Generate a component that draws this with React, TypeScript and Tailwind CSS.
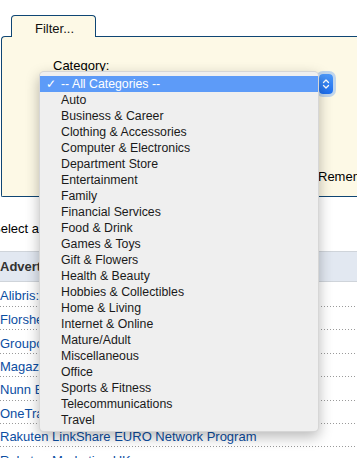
const CATEGORIES = [
  "Auto",
  "Business & Career",
  "Clothing & Accessories",
  "Computer & Electronics",
  "Department Store",
  "Entertainment",
  "Family",
  "Financial Services",
  "Food & Drink",
  "Games & Toys",
  "Gift & Flowers",
  "Health & Beauty",
  "Hobbies & Collectibles",
  "Home & Living",
  "Internet & Online",
  "Mature/Adult",
  "Miscellaneous",
  "Office",
  "Sports & Fitness",
  "Telecommunications",
  "Travel",
];

const ADVERTISERS = [
  "Alibris: Books, Music & Movies",
  "Florsheim Shoes",
  "Groupon UK",
  "Magazines.com",
  "Nunn Bush Shoes",
  "OneTravel.com",
  "Rakuten LinkShare EURO Network Program",
  "Rakuten Marketing UK",
];

const dotted =
  "bg-[linear-gradient(to_right,#9a9a9a_1px,transparent_1px)] bg-[length:3px_1px] bg-repeat-x bg-bottom";

function SelectKnob() {
  return (
    <div className="flex h-[20px] w-[14px] items-center justify-center rounded-[4px] bg-gradient-to-b from-[#4c98f8] to-[#1d6ff0] shadow-[0_0_0_3px_rgba(120,170,245,0.45)]">
      <svg width="8" height="12" viewBox="0 0 8 12" fill="none">
        <path d="M1.5 4.5 L4 2 L6.5 4.5" stroke="white" strokeWidth="1.3" strokeLinecap="round" strokeLinejoin="round" />
        <path d="M1.5 7.5 L4 10 L6.5 7.5" stroke="white" strokeWidth="1.3" strokeLinecap="round" strokeLinejoin="round" />
      </svg>
    </div>
  );
}

function CategoryMenu() {
  return (
    <div className="absolute left-[39px] top-[71px] z-20 w-[280px] rounded-[5px] border border-black/10 bg-[#efefef] pb-[3px] pt-[4px] font-['Liberation_Sans',Arial,sans-serif] text-[12.3px] text-[#1a1a1a] shadow-[0_5px_14px_rgba(0,0,0,0.28)]">
      <div className="flex h-[16px] items-center bg-[#5d9bf8] text-white">
        <span className="w-[21px] pl-[6px] text-[12px] leading-none">✓</span>
        <span className="leading-none">-- All Categories --</span>
      </div>
      {CATEGORIES.map((c) => (
        <div key={c} className="flex h-[16px] items-center pl-[21px] leading-none">
          {c}
        </div>
      ))}
    </div>
  );
}

export default function App() {
  return (
    <div className="relative h-[458px] w-[357px] overflow-hidden bg-white font-['Liberation_Sans',Arial,sans-serif] text-[13px] leading-[15px] text-black">
      <div className="pt-[15px]">
        <div className="relative z-10 -mb-px ml-[11px] h-[22px] w-[85px] rounded-t-[4px] border border-b-0 border-[#0f4674] bg-[#fdf9e6] pl-[23px] pt-[5px] text-[#111]">
          Filter...
        </div>
        <div className="ml-[1px] rounded-tl-[4px] rounded-bl-[2px] border border-r-0 border-[#0f4674] bg-[#fdf9e6] pb-[12px] pt-[21px]">
          <div className="pl-[51px]">Category:</div>
          <div className="ml-[39px] mt-[1px] flex h-[20px] w-[292px] justify-end rounded-[4px] bg-white">
            <SelectKnob />
          </div>
          <div className="mt-[75px] whitespace-nowrap pl-[316px]">Remember my selection</div>
        </div>
      </div>

      <div className="-ml-[8px] mt-[24px] whitespace-nowrap">Select an advertiser below to view its offers</div>

      <div className="mt-[15px]">
        <div className="flex h-[31px] items-center border-y border-[#cfd4da] bg-[#e2e8f1] font-bold text-[#333]">
          Advertiser
        </div>
        {ADVERTISERS.map((a, i) => (
          <div
            key={a}
            className={`flex items-center whitespace-nowrap pt-[2px] text-[#0b4ea2] ${dotted} ${
              i === 0 ? "h-[25px]" : "h-[23.4px]"
            }`}
          >
            {a}
          </div>
        ))}
      </div>

      <CategoryMenu />
    </div>
  );
}
